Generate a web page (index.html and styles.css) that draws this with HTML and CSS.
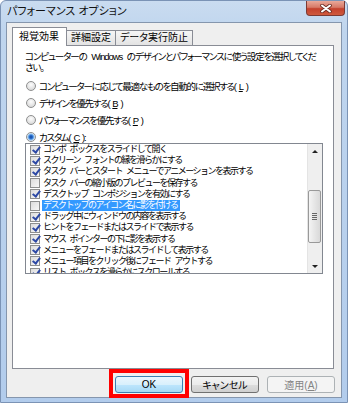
FILE: index.html
```html
<!DOCTYPE html>
<html lang="ja">
<head>
  <meta charset="UTF-8" />
  <title>パフォーマンス オプション</title>
  <link rel="stylesheet" href="styles.css">
</head>
<body>

  <div class="window">
    <div class="titlebar">
      <span class="title">パフォーマンス オプション</span>
      <button class="close" title="閉じる">
        <svg width="12" height="9" viewBox="0 0 12 9">
          <path d="M2 1.5 L10 7.5 M10 1.5 L2 7.5" stroke="#6b2b22" stroke-width="3.6" stroke-linecap="round" fill="none"/>
          <path d="M2 1.5 L10 7.5 M10 1.5 L2 7.5" stroke="#fff" stroke-width="2" stroke-linecap="round" fill="none"/>
        </svg>
      </button>
    </div>

    <div class="client">
      <div class="tabs">
        <div class="tab active">視覚効果</div>
        <div class="tab">詳細設定</div>
        <div class="tab">データ実行防止</div>
      </div>

      <div class="panel">
        <p class="desc">コンピューターの Windows のデザインとパフォーマンスに使う設定を選択してくだ<br>さい。</p>

        <div class="options">
          <label class="option"><span class="radio"></span>コンピューターに応じて最適なものを自動的に選択する(<u>L</u>)</label>
          <label class="option"><span class="radio"></span>デザインを優先する(<u>B</u>)</label>
          <label class="option"><span class="radio"></span>パフォーマンスを優先する(<u>P</u>)</label>
          <label class="option"><span class="radio checked"></span>カスタム(<u>C</u>):</label>
        </div>

        <div class="listbox">
          <ul class="items">
            <li><span class="check on"></span>コンボ ボックスをスライドして開く</li>
            <li><span class="check on"></span>スクリーン フォントの縁を滑らかにする</li>
            <li><span class="check on"></span>タスク バーとスタート メニューでアニメーションを表示する</li>
            <li><span class="check"></span>タスク バーの縮小版のプレビューを保存する</li>
            <li><span class="check on"></span>デスクトップ コンポジションを有効にする</li>
            <li class="selected"><span class="check"></span><span class="label">デスクトップのアイコン名に影を付ける</span></li>
            <li><span class="check on"></span>ドラッグ中にウィンドウの内容を表示する</li>
            <li><span class="check on"></span>ヒントをフェードまたはスライドで表示する</li>
            <li><span class="check on"></span>マウス ポインターの下に影を表示する</li>
            <li><span class="check on"></span>メニューをフェードまたはスライドして表示する</li>
            <li><span class="check on"></span>メニュー項目をクリック後にフェード アウトする</li>
            <li><span class="check on"></span>リスト ボックスを滑らかにスクロールする</li>
          </ul>
          <div class="scrollbar">
            <div class="sb-btn"><span class="arrow up"></span></div>
            <div class="sb-track">
              <div class="thumb"><span class="grip"></span></div>
            </div>
            <div class="sb-btn"><span class="arrow down"></span></div>
          </div>
        </div>
      </div>

      <div class="actions">
        <button class="btn default">OK</button>
        <button class="btn">キャンセル</button>
        <button class="btn" disabled>適用(<u>A</u>)</button>
      </div>
    </div>
  </div>

</body>
</html>
```

FILE: styles.css
```css
body {
  margin: 0;
  background: #fff;
  font-family: "Liberation Sans", "Noto Sans CJK JP", sans-serif;
  font-size: 10px;
  font-feature-settings: "palt";
  color: #000;
}

.window {
  width: 348px;
  height: 403px;
  box-sizing: border-box;
  display: flex;
  flex-direction: column;
  padding: 0 5px 4px;
  border: 1px solid #7b93b5;
  border-radius: 6px 6px 0 0;
  background: linear-gradient(180deg, #cadcf0 0, #bfd5ee 30px, #b2ccec 100%);
}

/* title bar */
.titlebar {
  height: 21px;
  display: flex;
  justify-content: space-between;
  align-items: flex-start;
}

.title {
  padding: 3px 0 0 1px;
  font-size: 11px;
  line-height: 14px;
  color: #111;
}

.close {
  width: 39px;
  height: 15px;
  margin-right: -3px;
  padding: 0;
  display: flex;
  align-items: center;
  justify-content: center;
  border: 1px solid #7d3a33;
  border-top: none;
  border-radius: 0 0 4px 4px;
  background: linear-gradient(180deg, #e9a99a 0, #d77a68 45%, #c4412d 55%, #cf5a3e 100%);
}

/* dialog body */
.client {
  flex: 1;
  display: flex;
  flex-direction: column;
  padding: 5px 7px 4px 5px;
  border: 1px solid #8596ad;
  background: #efefef;
}

.tabs {
  height: 17px;
  display: flex;
  align-items: flex-end;
}

.tab {
  height: 14px;
  padding: 0 4px;
  margin-left: -1px;
  line-height: 14px;
  border: 1px solid #898c95;
  border-bottom: none;
  background: linear-gradient(180deg, #f6f6f6, #e3e3e3);
}

.tab.active {
  height: 18px;
  margin: 0 0 -1px 0;
  padding: 0 7px 0 6px;
  line-height: 18px;
  background: #fff;
  position: relative;
  z-index: 1;
}

.panel {
  flex: 1;
  padding: 5px 10px 0 12px;
  border: 1px solid #898c95;
  background: #fff;
}

.desc {
  margin: 0;
  font-size: 9.5px;
  line-height: 11px;
  letter-spacing: -1.1px;
  word-spacing: 3px;
  white-space: nowrap;
}

.options {
  display: flex;
  flex-direction: column;
  gap: 5px;
  margin-top: 7px;
}

.option {
  display: flex;
  align-items: center;
  gap: 3px;
  height: 12px;
  font-size: 9.5px;
  letter-spacing: -1.25px;
}

.option u,
.btn u {
  text-decoration-thickness: 1px;
  text-underline-offset: 1px;
}

.radio {
  width: 10px;
  height: 10px;
  margin-left: 1px;
  box-sizing: border-box;
  border: 1px solid #8e8f8f;
  border-radius: 50%;
  background: radial-gradient(circle at 50% 35%, #fdfdfd 0, #e2e2e2 60%, #cfcfcf 100%);
}

.radio.checked {
  background: radial-gradient(circle, #16479b 0, #2a6fcf 30%, #7fb6ea 50%, #e6eef7 70%);
}

/* list with checkboxes */
.listbox {
  height: 131px;
  box-sizing: border-box;
  display: flex;
  border: 1px solid #828790;
  background: #fff;
}

.items {
  flex: 1;
  margin: 0;
  padding: 0;
  list-style: none;
  overflow: hidden;
}

.items li {
  height: 11.2px;
  display: flex;
  align-items: center;
  gap: 3px;
  padding-left: 4px;
  white-space: nowrap;
  font-size: 9px;
  line-height: 11px;
  font-feature-settings: normal;
  letter-spacing: -1.5px;
  word-spacing: 3px;
}

.check {
  width: 10px;
  height: 10px;
  flex: none;
  box-sizing: border-box;
  border: 1px solid #8e8f8f;
  background: linear-gradient(135deg, #dcdcdc, #f7f7f7);
}

.check.on::after {
  content: "";
  display: block;
  width: 2.5px;
  height: 6px;
  margin: -1px 0 0 2.5px;
  border: solid #2d49a5;
  border-width: 0 2px 2px 0;
  transform: rotate(38deg);
}

.selected .label {
  padding: 0 2px 0 1px;
  margin-left: -1px;
  background: #3399ff;
  color: #fff;
}

.scrollbar {
  width: 14px;
  display: flex;
  flex-direction: column;
  background: #efefef;
  border-left: 1px solid #e4e4e4;
}

.sb-btn {
  height: 14px;
  display: flex;
  align-items: center;
  justify-content: center;
}

.arrow {
  width: 0;
  height: 0;
  border-left: 3px solid transparent;
  border-right: 3px solid transparent;
}

.arrow.up {
  border-bottom: 3px solid #222;
}

.arrow.down {
  border-top: 3px solid #222;
}

.sb-track {
  flex: 1;
  padding-top: 32px;
}

.thumb {
  height: 53px;
  box-sizing: border-box;
  margin: 0 1px 0 0;
  display: flex;
  align-items: center;
  justify-content: center;
  border: 1px solid #999;
  border-radius: 2px;
  background: linear-gradient(90deg, #f4f4f4, #e6e6e6 50%, #d9d9d9);
}

.grip {
  width: 5px;
  height: 7px;
  background: repeating-linear-gradient(180deg, #666 0 1px, transparent 1px 2px);
}

/* buttons */
.actions {
  display: flex;
  justify-content: flex-end;
  gap: 8px;
  margin: 7px -1px 0 0;
}

.btn {
  width: 68px;
  height: 17px;
  padding: 0;
  font: inherit;
  font-size: 10px;
  border: 1px solid #707070;
  border-radius: 3px;
  background: linear-gradient(180deg, #f3f3f3 0, #ebebeb 50%, #dddddd 51%, #cfcfcf 100%);
  color: #000;
}

.btn.default {
  position: relative;
  border-color: #3c7fb1;
  background: linear-gradient(180deg, #eaf6fd 0, #d9f0fc 50%, #bee6fd 51%, #a7d9f5 100%);
}

/* red annotation frame around OK */
.btn.default::after {
  content: "";
  position: absolute;
  top: -8px;
  bottom: -6px;
  left: -7px;
  right: -7px;
  border: 4px solid #ff0000;
}

.btn:disabled {
  border-color: #adb2b5;
  background: #f4f4f4;
  color: #838383;
}
```
